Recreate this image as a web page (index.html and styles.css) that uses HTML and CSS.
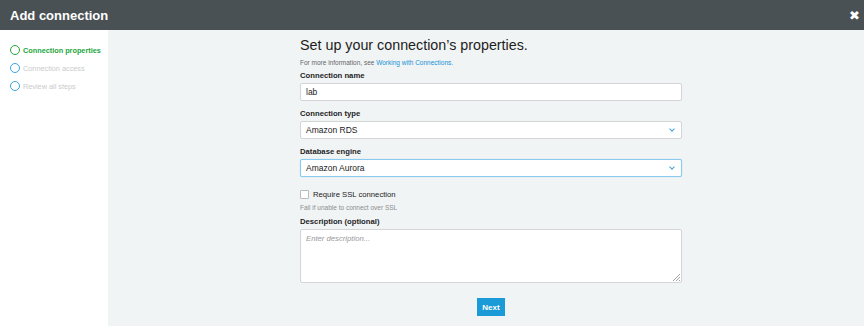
FILE: index.html
```html
<!DOCTYPE html>
<html lang="en">
<head>
  <meta charset="UTF-8">
  <title>Add connection</title>
  <link rel="stylesheet" href="styles.css">
</head>
<body>

<header class="topbar">
  <h1>Add connection</h1>
  <span class="close">&#10006;</span>
</header>

<div class="wizard">
  <nav class="steps">
    <div class="step active"><span class="dot"></span>Connection properties</div>
    <div class="step"><span class="dot"></span>Connection access</div>
    <div class="step"><span class="dot"></span>Review all steps</div>
  </nav>

  <main class="main">
    <div class="form">
      <h2>Set up your connection’s properties.</h2>
      <p class="info">For more information, see <a href="#">Working with Connections.</a></p>

      <label class="label">Connection name</label>
      <div class="field">lab</div>

      <label class="label">Connection type</label>
      <div class="field select">Amazon RDS <span class="chev"></span></div>

      <label class="label">Database engine</label>
      <div class="field select focus">Amazon Aurora <span class="chev"></span></div>

      <div class="check"><span class="box"></span>Require SSL connection</div>
      <p class="hint">Fail if unable to connect over SSL</p>

      <label class="label">Description (optional)</label>
      <div class="field area">
        <span class="placeholder">Enter description...</span>
        <svg class="grip" width="8" height="8" viewBox="0 0 8 8">
          <path d="M8 1L1 8M8 4L4 8M8 7L7 8" stroke="#8a8a8a" stroke-width="0.8"/>
        </svg>
      </div>

      <div class="actions">
        <button class="next">Next</button>
      </div>
    </div>
  </main>
</div>

</body>
</html>
```

FILE: styles.css
```css
body {
  margin: 0;
  height: 326px;
  overflow: hidden;
  font-family: "Liberation Sans", Arial, sans-serif;
  background: #f1f4f5;
}

.topbar {
  height: 30px;
  background: #4a5154;
  display: flex;
  align-items: center;
  justify-content: space-between;
  padding: 0 4px 0 10px;
}

.topbar h1 {
  margin: 0;
  color: #fff;
  font-size: 13px;
  font-weight: bold;
}

.close {
  color: #fff;
  font-size: 13px;
  font-family: "DejaVu Sans", sans-serif;
  font-weight: bold;
}

.wizard {
  display: flex;
  height: 296px;
}

.steps {
  width: 108px;
  background: #fff;
  padding-top: 11px;
}

.step {
  display: flex;
  align-items: center;
  height: 18px;
  padding-left: 10px;
  font-size: 7.3px;
  white-space: nowrap;
  color: #c9cbcc;
}

.step.active {
  color: #22a63d;
  font-weight: bold;
}

.dot {
  flex: none;
  width: 8px;
  height: 8px;
  border: 1.3px solid #3ba3dd;
  border-radius: 50%;
  margin-right: 3px;
}

.step.active .dot {
  border-color: #22a63d;
}

.main {
  flex: 1;
}

.form {
  width: 382px;
  margin-left: 192px;
  display: flex;
  flex-direction: column;
}

.form h2 {
  margin: 6px 0 0;
  font-size: 14.3px;
  font-weight: normal;
  color: #1c1c1c;
  line-height: 18px;
}

.info {
  margin: 5px 0 0;
  font-size: 6.5px;
  color: #666;
}

.info a {
  color: #1791d6;
  text-decoration: none;
}

.label {
  font-size: 7.7px;
  font-weight: bold;
  color: #1e1e1e;
  line-height: 10px;
  margin-top: 5px;
}

.info + .label {
  margin-top: 5px;
}

.field {
  height: 18px;
  box-sizing: border-box;
  background: #fff;
  border: 1px solid #d3d5d6;
  border-radius: 2px;
  margin-top: 2px;
  margin-bottom: 3px;
  padding-left: 5px;
  display: flex;
  align-items: center;
  font-size: 8.5px;
  color: #222;
  position: relative;
}

.select {
  justify-content: space-between;
  padding-right: 7px;
}

.focus {
  border-color: #8ccbf0;
  box-shadow: 0 0 1px #8ccbf0;
}

.chev {
  width: 3px;
  height: 3px;
  border-right: 1.2px solid #3ba3dd;
  border-bottom: 1.2px solid #3ba3dd;
  transform: rotate(45deg);
  margin-top: -2px;
}

.check {
  display: flex;
  align-items: center;
  margin-top: 10px;
  font-size: 7.7px;
  color: #222;
}

.box {
  width: 9px;
  height: 9px;
  box-sizing: border-box;
  border: 1px solid #b9bcbe;
  border-radius: 1px;
  background: #fff;
  margin-right: 4px;
}

.hint {
  margin: 5px 0 0;
  font-size: 6.5px;
  color: #8a8d8f;
}

.hint + .label {
  margin-top: 6px;
}

.area {
  height: 54px;
  align-items: flex-start;
  padding-top: 4px;
  font-size: 7.7px;
}

.placeholder {
  font-style: italic;
  color: #999;
}

.grip {
  position: absolute;
  right: 1px;
  bottom: 1px;
}

.actions {
  display: flex;
  justify-content: center;
  margin-top: 12px;
}

.next {
  width: 28px;
  height: 18px;
  padding: 0;
  border: none;
  background: #1b9ad8;
  color: #fff;
  font-family: inherit;
  font-size: 8px;
  font-weight: bold;
}
```
